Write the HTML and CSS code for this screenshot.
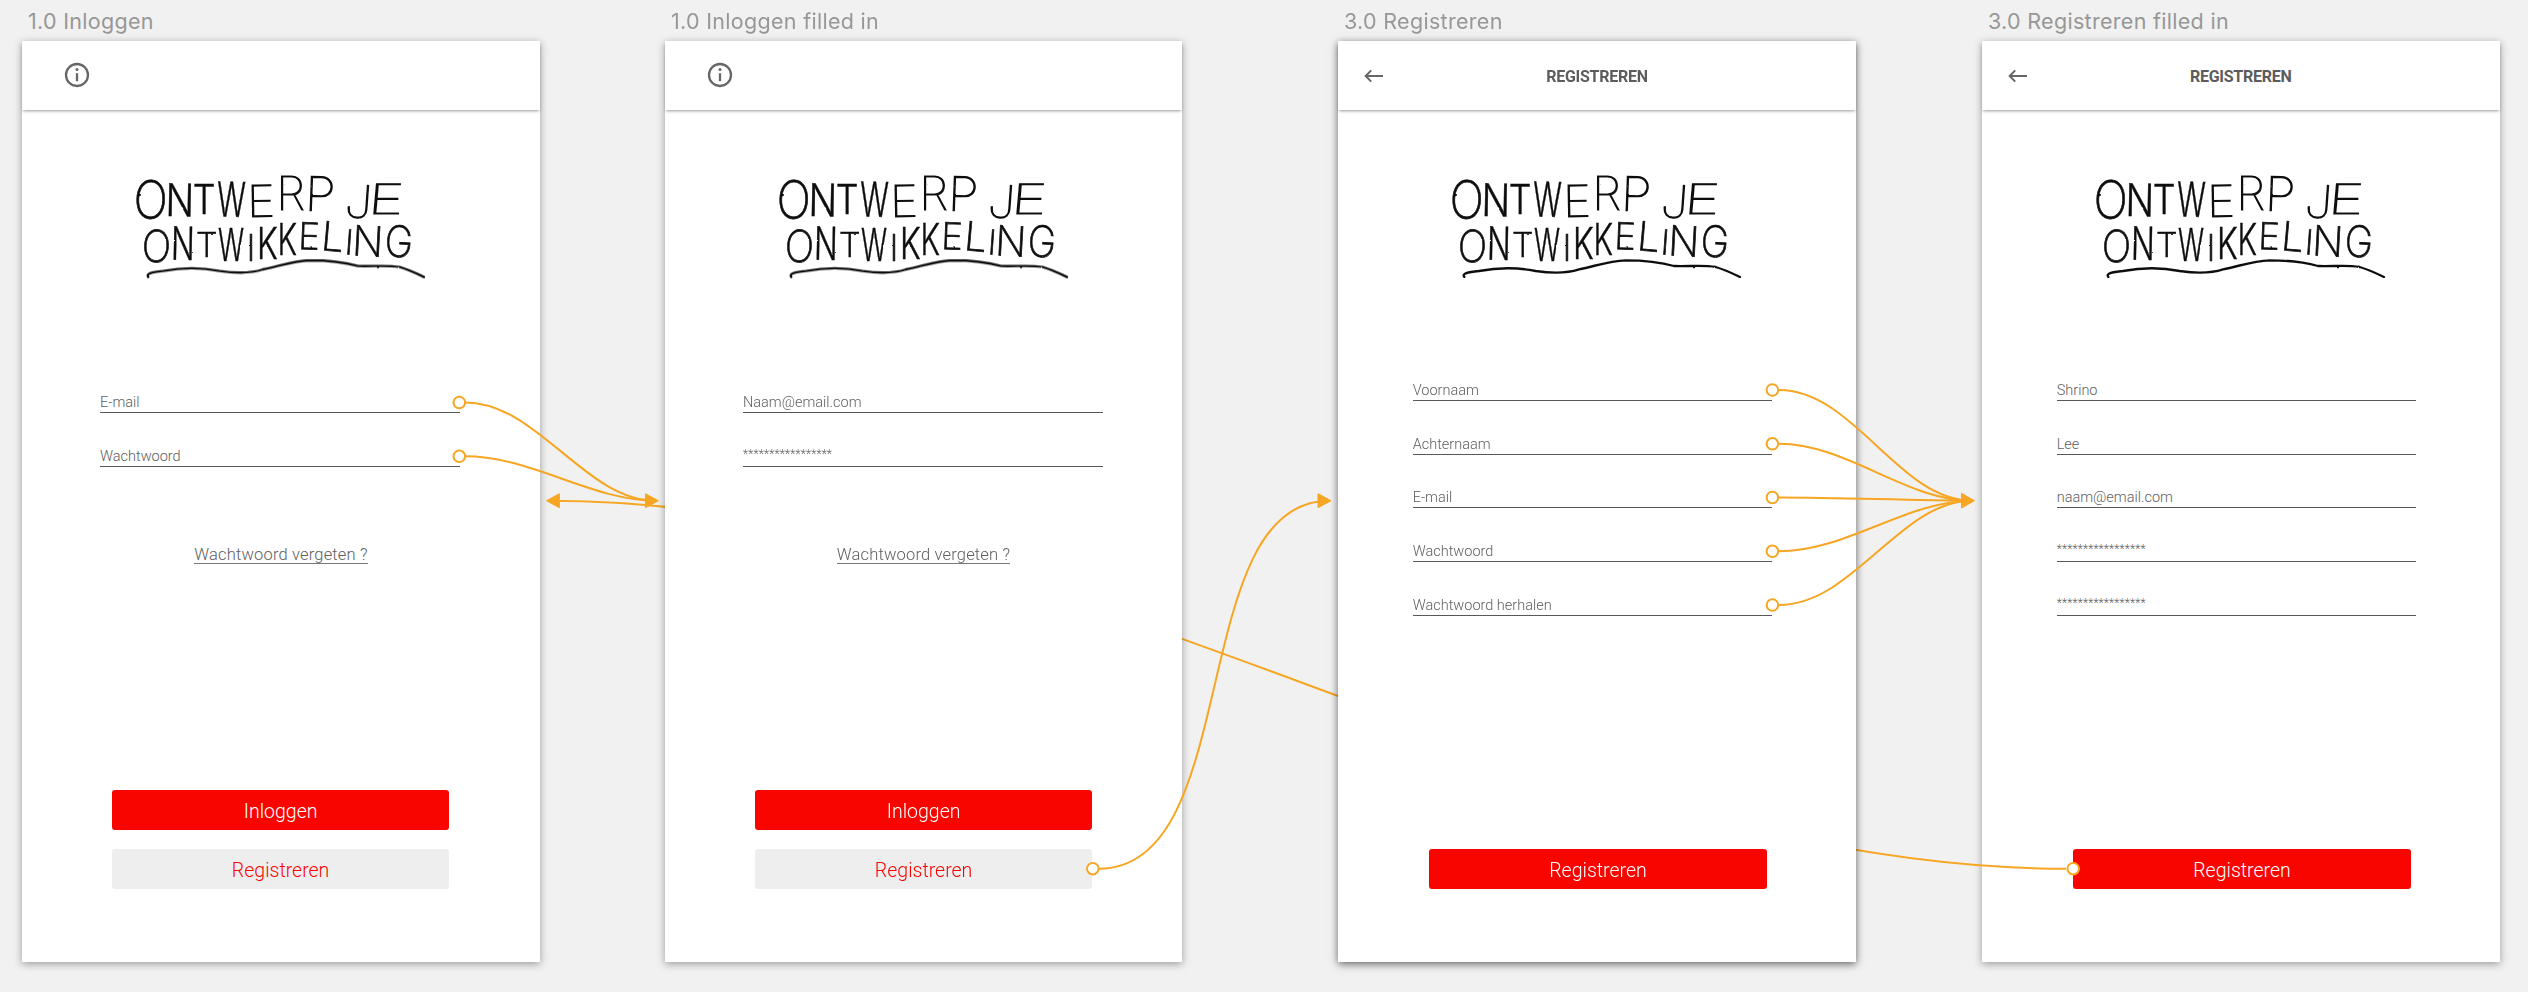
FILE: index.html
```html
<!DOCTYPE html>
<html lang="nl">
<head>
<meta charset="utf-8">
<title>Ontwerp je ontwikkeling</title>
<link rel="stylesheet" href="styles.css">
</head>
<body>
<svg class="defs" width="0" height="0" aria-hidden="true">
  <defs>
    <filter id="rough" x="-5%" y="-5%" width="110%" height="110%">
      <feTurbulence type="fractalNoise" baseFrequency="0.06" numOctaves="2" seed="4" result="n"/>
      <feDisplacementMap in="SourceGraphic" in2="n" scale="5"/>
    </filter>
    <symbol id="logo" viewBox="0 0 960 390">
      <g class="logo-letters" filter="url(#rough)">
        <text transform="translate(90 176) rotate(2) scale(.86 1)" font-size="158">O</text>
        <text class="narrow" transform="translate(179 169) rotate(1) scale(.84 1)" font-size="135">N</text>
        <text class="narrow" transform="translate(252 163) scale(.88 1)" font-size="122">T</text>
        <text class="narrow" transform="translate(333 170) rotate(1) scale(.62 1)" font-size="144">W</text>
        <text class="wide" transform="translate(424 170) rotate(-1) scale(1.1 1)" font-size="131">E</text>
        <text class="wide" transform="translate(512 150) scale(1.02 1)" font-size="138">R</text>
        <text class="wide" transform="translate(599 153) rotate(2) scale(1.06 1)" font-size="142">P</text>
        <text class="wide" transform="translate(712 173) rotate(4) scale(1.08 1)" font-size="136">J</text>
        <text class="wide" transform="translate(795 163) skewX(-5) scale(1.45 1)" font-size="125">E</text>
        <text transform="translate(107 306) rotate(3) scale(.88 1)" font-size="133">O</text>
        <text class="narrow" transform="translate(188 300) rotate(1) scale(.68 1)" font-size="138">N</text>
        <text transform="translate(260 290) scale(1.02 1)" font-size="103">T</text>
        <text class="narrow" transform="translate(333 303) scale(.6 1)" font-size="135">W</text>
        <text transform="translate(393 303)" font-size="111">I</text>
        <text class="narrow" transform="translate(442 297) scale(.74 1)" font-size="130">K</text>
        <text class="narrow" transform="translate(502 286) scale(.68 1)" font-size="133">K</text>
        <text transform="translate(566 268) rotate(2) scale(1 1)" font-size="111">E</text>
        <text transform="translate(635 273) rotate(5) scale(1 1)" font-size="121">L</text>
        <text transform="translate(685 284) rotate(4)" font-size="103">I</text>
        <text transform="translate(741 288) rotate(3) scale(.98 1)" font-size="125">N</text>
        <text transform="translate(834 291) rotate(3) scale(.88 1)" font-size="130">G</text>
      </g>
      <path class="logo-line" filter="url(#rough)" d="M85 351C77 341 94 336 129 333C199 320 249 323 299 333C349 340 399 338 429 328C479 318 519 303 569 301C629 301 679 308 714 318C759 320 799 314 839 321C869 330 889 340 912 351"/>
    </symbol>
    <symbol id="info" viewBox="0 0 26 26">
      <circle cx="13" cy="13" r="11" fill="none" stroke="#666" stroke-width="2.3"/>
      <circle cx="13" cy="7.6" r="1.5" fill="#666"/>
      <path d="M13 11.2v8" stroke="#666" stroke-width="2.3"/>
    </symbol>
    <symbol id="back" viewBox="0 0 20 14">
      <path d="M19 7H2M7.2 1.4L1.7 7L7.2 12.6" fill="none" stroke="#666" stroke-width="2"/>
    </symbol>
  </defs>
</svg>

<main class="canvas">
  <section class="board board-login">
    <h2 class="board-name"><span>1.0 Inloggen</span></h2>
    <div class="screen">
      <header class="bar"><svg class="info"><use href="#info"/></svg></header>
      <svg class="logo"><use href="#logo"/></svg>
      <div class="fields">
        <div class="field"><span>E-mail</span></div>
        <div class="field"><span>Wachtwoord</span></div>
      </div>
      <a class="forgot"><span>Wachtwoord vergeten ?</span></a>
      <div class="actions">
        <div class="btn primary"><span>Inloggen</span></div>
        <div class="btn"><span>Registreren</span></div>
      </div>
    </div>
  </section>

  <section class="board board-login above">
    <h2 class="board-name"><span>1.0 Inloggen filled in</span></h2>
    <div class="screen">
      <header class="bar"><svg class="info"><use href="#info"/></svg></header>
      <svg class="logo"><use href="#logo"/></svg>
      <div class="fields">
        <div class="field"><span>Naam@email.com</span></div>
        <div class="field secret"><span>*****************</span></div>
      </div>
      <a class="forgot"><span>Wachtwoord vergeten ?</span></a>
      <div class="actions">
        <div class="btn primary"><span>Inloggen</span></div>
        <div class="btn"><span>Registreren</span></div>
      </div>
    </div>
  </section>

  <section class="board board-register above strong">
    <h2 class="board-name"><span>3.0 Registreren</span></h2>
    <div class="screen">
      <header class="bar"><svg class="back"><use href="#back"/></svg><span class="bar-title">REGISTREREN</span></header>
      <svg class="logo"><use href="#logo"/></svg>
      <div class="fields">
        <div class="field"><span>Voornaam</span></div>
        <div class="field"><span>Achternaam</span></div>
        <div class="field"><span>E-mail</span></div>
        <div class="field"><span>Wachtwoord</span></div>
        <div class="field"><span>Wachtwoord herhalen</span></div>
      </div>
      <div class="actions">
        <div class="btn primary"><span>Registreren</span></div>
      </div>
    </div>
  </section>

  <section class="board board-register">
    <h2 class="board-name"><span>3.0 Registreren filled in</span></h2>
    <div class="screen">
      <header class="bar"><svg class="back"><use href="#back"/></svg><span class="bar-title">REGISTREREN</span></header>
      <svg class="logo"><use href="#logo"/></svg>
      <div class="fields">
        <div class="field"><span>Shrino</span></div>
        <div class="field"><span>Lee</span></div>
        <div class="field"><span>naam@email.com</span></div>
        <div class="field secret"><span>*****************</span></div>
        <div class="field secret"><span>*****************</span></div>
      </div>
      <div class="actions">
        <div class="btn primary"><span>Registreren</span></div>
      </div>
    </div>
  </section>

  <svg class="links links-back" viewBox="0 0 2528 992">
    <path d="M2066 868.7C1545 868.7 1070 500.7 549 500.7"/>
    <polygon points="546.5,500.7 559.3,493.7 559.3,507.7"/>
    <circle cx="2073.2" cy="868.7" r="5.8"/>
  </svg>
  <svg class="links links-front" viewBox="0 0 2528 992">
    <path d="M465 402.5C538 402.5 585 500.7 656 500.7"/>
    <path d="M465 456.3C532 456.3 591 500.7 656 500.7"/>
    <path d="M1099 868.7C1244 868.7 1186 500.7 1329 500.7"/>
    <path d="M1779 390C1854 390 1899 500.7 1972 500.7"/>
    <path d="M1779 443.8C1847 443.8 1906 500.7 1972 500.7"/>
    <path d="M1779 497.5C1844 497.5 1909 500.7 1972 500.7"/>
    <path d="M1779 551.3C1846 551.3 1907 500.7 1972 500.7"/>
    <path d="M1779 605C1853 605 1900 500.7 1972 500.7"/>
    <polygon points="658.4,500.7 645.4,493.7 645.4,507.7"/>
    <polygon points="1331,500.7 1318,493.7 1318,507.7"/>
    <polygon points="1974.5,500.7 1961.5,493.3 1961.5,508.1"/>
    <circle cx="459.3" cy="402.5" r="5.8"/>
    <circle cx="459.3" cy="456.3" r="5.8"/>
    <circle cx="1092.8" cy="868.7" r="5.8"/>
    <circle cx="1772.4" cy="390" r="5.8"/>
    <circle cx="1772.4" cy="443.8" r="5.8"/>
    <circle cx="1772.4" cy="497.5" r="5.8"/>
    <circle cx="1772.4" cy="551.3" r="5.8"/>
    <circle cx="1772.4" cy="605" r="5.8"/>
  </svg>
</main>
</body>
</html>
```
FILE: styles.css
```css
* { box-sizing: border-box; }

body {
  margin: 0;
  background: #f1f1f1;
  font-family: Roboto, "Liberation Sans", sans-serif;
  color: #606060;
}

.defs { position: absolute; }

.canvas {
  position: relative;
  display: grid;
  grid-template-columns: 518px 517px 518px 517.5px;
  column-gap: 125px;
  width: 2528px;
  height: 992px;
  padding-left: 22px;
  overflow: hidden;
}

.board { position: relative; }
.board:nth-child(3) { margin: 0 -31px 0 31px; }
.board:nth-child(4) { margin: 0 -32px 0 32px; }
.above { z-index: 2; }

.board-name {
  height: 40.5px;
  margin: 0;
  padding: 8px 0 0 6px;
  font: 400 21.5px/27px Inter, sans-serif;
  letter-spacing: .3px;
  color: #979797;
  white-space: nowrap;
}

.screen {
  display: flex;
  flex-direction: column;
  height: 921.5px;
  background: #fff;
  box-shadow: 0 2px 8px rgba(0, 0, 0, .36);
}
.strong .screen { box-shadow: 0 2px 8px rgba(0, 0, 0, .6); }

.bar {
  display: grid;
  grid-template-columns: 1fr auto 1fr;
  align-items: center;
  height: 69.5px;
  background: #fff;
  box-shadow: 0 2px 3px -1px rgba(0, 0, 0, .4);
}
.info { width: 26px; height: 26px; margin-left: 41.5px; }
.back { width: 20px; height: 14px; margin: 1px 0 0 26px; }
.bar-title {
  padding-top: 3px;
  font-size: 16px;
  font-weight: 700;
  line-height: 20px;
  letter-spacing: -.25px;
  color: #5c5c5c;
}

.logo {
  width: 320px;
  height: 130px;
  margin: 50px 0 0 98px;
}
.logo-letters {
  font-family: Inter, sans-serif;
  font-weight: 200;
  text-anchor: middle;
  fill: #111;
  stroke: #111;
  stroke-width: 2.2;
}
.logo-letters .narrow { font-weight: 300; stroke-width: 1.5; }
.logo-letters .wide { font-weight: 100; stroke-width: 3.4; }
.logo-line { fill: none; stroke: #111; stroke-width: 7; stroke-linecap: round; }

.fields {
  display: flex;
  flex-direction: column;
  width: 359.5px;
  margin: 69.2px 0 0 78px;
}
.board-register .fields { margin: 57.1px 0 0 74.7px; }
.field {
  display: flex;
  align-items: flex-end;
  height: 53.8px;
  padding-bottom: 1px;
  border-bottom: 1.4px solid #585858;
  font-size: 14.5px;
  font-weight: 300;
  line-height: 17px;
}
.secret { font-size: 12px; letter-spacing: .15px; padding-bottom: 3px; }

.forgot {
  align-self: center;
  margin-top: 79px;
  font-size: 16.5px;
  font-weight: 300;
  line-height: 17px;
  letter-spacing: .17px;
  border-bottom: 1px solid #777;
}

.actions {
  display: flex;
  flex-direction: column;
  gap: 19.5px;
  width: 337.2px;
  margin: auto 0 73.5px 90px;
}
.board-register .actions { margin-left: 91.4px; }
.btn {
  display: flex;
  justify-content: center;
  height: 39.5px;
  border-radius: 3px;
  background: #eee;
  color: #f90500;
  font-size: 19.5px;
  font-weight: 300;
  line-height: 43px;
}
.primary { background: #f90500; color: #fff; }

.links {
  position: absolute;
  left: 0;
  top: 0;
  width: 2528px;
  height: 992px;
  pointer-events: none;
}
.links path { fill: none; stroke: #f6a623; stroke-width: 2; }
.links polygon { fill: #f6a623; stroke: #f6a623; stroke-width: 1; stroke-linejoin: round; }
.links circle { fill: #fff; stroke: #f6a623; stroke-width: 2; }
.links-back { z-index: 1; }
.links-front { z-index: 3; }
```
